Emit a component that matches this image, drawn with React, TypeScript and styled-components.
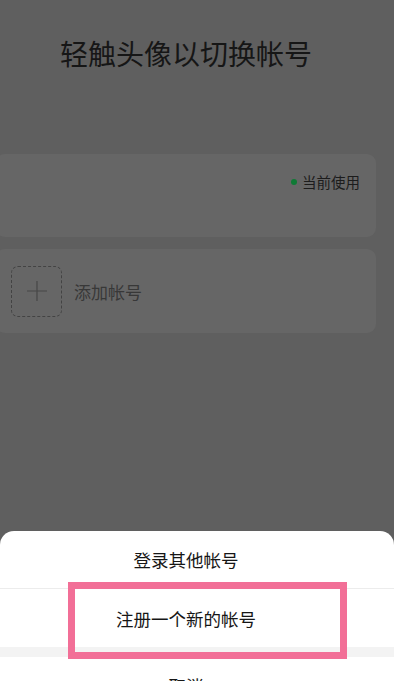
import React from "react";
import styled, { createGlobalStyle } from "styled-components";

const Global = createGlobalStyle`
  html, body { margin: 0; padding: 0; background: #ffffff; }
  body { font-family: "Noto Sans CJK SC", "Noto Sans", sans-serif; }
  * { box-sizing: border-box; }
`;

const Root = styled.div`
  position: relative;
  width: 400px;
  height: 681px;
  overflow: hidden;
  background: #ffffff;
`;

const Screen = styled.div`
  width: 394px;
  height: 681px;
  background: #5f5f5f;
  display: flex;
  flex-direction: column;
`;

const Title = styled.h1`
  margin: 0;
  padding: 35px 22px 0 0;
  height: 142px;
  font-size: 28px;
  line-height: 36px;
  font-weight: 400;
  color: #161616;
  text-align: center;
`;

const CardList = styled.div`
  display: flex;
  flex-direction: column;
  gap: 12px;
  margin: 12px 0 0 -4px;
  width: 380px;
`;

const Card = styled.div<{ $h: number }>`
  height: ${(p) => p.$h}px;
  background: #666666;
  border-radius: 9px;
  display: flex;
`;

const CurrentCard = styled(Card)`
  justify-content: flex-end;
  align-items: flex-start;
  padding: 18px 16px 0 0;
`;

const Status = styled.div`
  display: flex;
  align-items: center;
  gap: 5px;
  font-size: 14.5px;
  line-height: 20px;
  color: #1c1c1c;
`;

const Dot = styled.span`
  width: 6px;
  height: 6px;
  border-radius: 50%;
  background: #0f7a35;
`;

const AddCard = styled(Card)`
  align-items: center;
  padding-left: 15px;
  gap: 12px;
`;

const AddBox = styled.div`
  width: 51px;
  height: 51px;
  border: 1.5px dashed #434343;
  border-radius: 7px;
  display: flex;
  align-items: center;
  justify-content: center;
`;

const AddLabel = styled.span`
  font-size: 17px;
  line-height: 24px;
  color: #383838;
  margin-top: 2px;
`;

const Spacer = styled.div`
  flex: 1;
`;

const Sheet = styled.div`
  height: 150px;
  background: #ffffff;
  border-radius: 14px 14px 0 0;
  display: flex;
  flex-direction: column;
`;

const SheetRow = styled.div<{ $h: number }>`
  height: ${(p) => p.$h}px;
  flex-shrink: 0;
  display: flex;
  align-items: center;
  justify-content: center;
  padding-right: 22px;
  font-size: 17.5px;
  color: #161616;
`;

const Divider = styled.div`
  height: 1px;
  background: #ececec;
  flex-shrink: 0;
`;

const Band = styled.div`
  height: 10px;
  background: #f3f3f3;
  flex-shrink: 0;
`;

const Highlight = styled.div`
  position: absolute;
  left: 68px;
  top: 582px;
  width: 279px;
  height: 77px;
  border: 7px solid #f26f97;
  pointer-events: none;
`;

export default function App() {
  return (
    <>
      <Global />
      <Root>
        <Screen>
          <Title>轻触头像以切换帐号</Title>
          <CardList>
            <CurrentCard $h={83}>
              <Status>
                <Dot />
                当前使用
              </Status>
            </CurrentCard>
            <AddCard $h={84}>
              <AddBox>
                <svg width="22" height="22" viewBox="0 0 22 22">
                  <path d="M11 1 V21 M1 11 H21" stroke="#474747" strokeWidth="1.2" fill="none" />
                </svg>
              </AddBox>
              <AddLabel>添加帐号</AddLabel>
            </AddCard>
          </CardList>
          <Spacer />
          <Sheet>
            <SheetRow $h={57}>登录其他帐号</SheetRow>
            <Divider />
            <SheetRow $h={58}>注册一个新的帐号</SheetRow>
            <Band />
            <SheetRow $h={56}>取消</SheetRow>
          </Sheet>
        </Screen>
        <Highlight />
      </Root>
    </>
  );
}
